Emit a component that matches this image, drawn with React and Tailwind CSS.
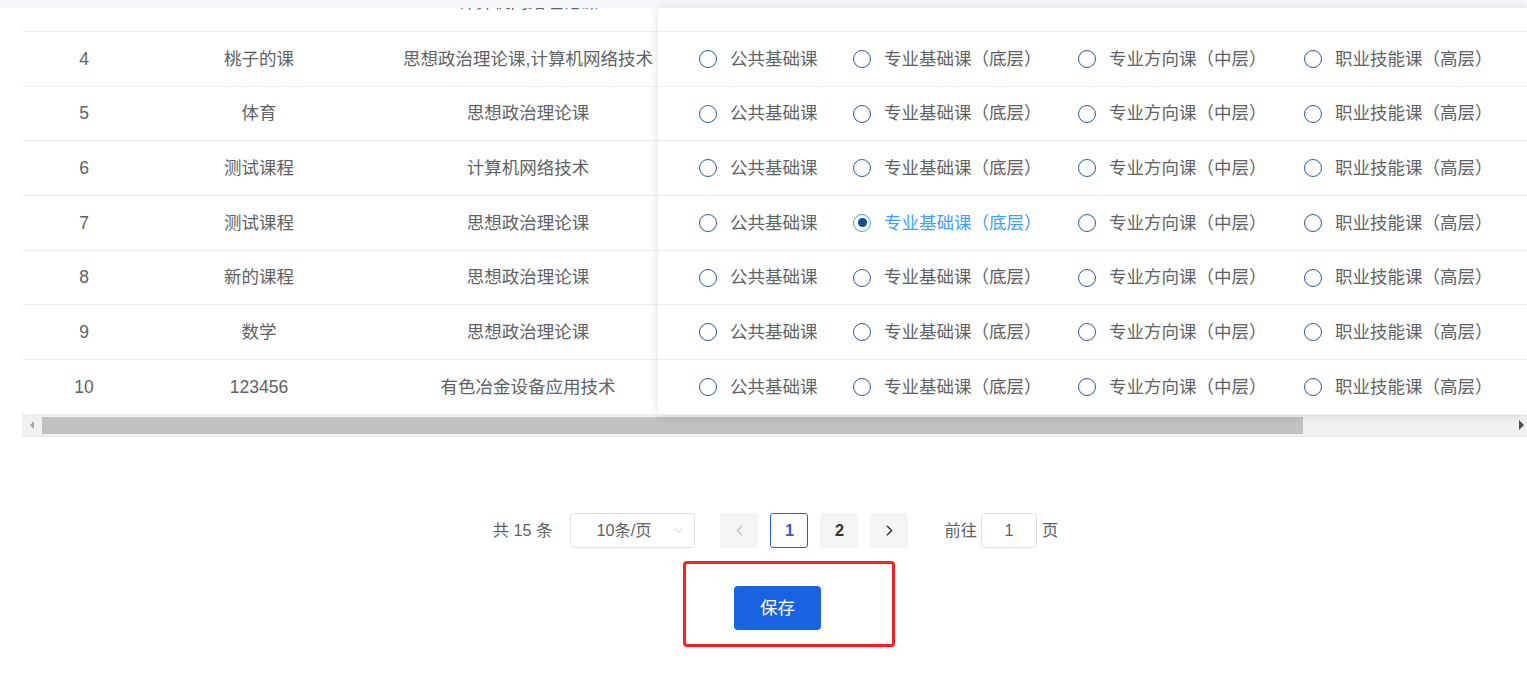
import React, { useState } from 'react';
import { ChevronDown, ChevronLeft, ChevronRight } from 'lucide-react';

const rows = [
    { no: 4, name: '桃子的课', major: '思想政治理论课,计算机网络技术', level: null },
    { no: 5, name: '体育', major: '思想政治理论课', level: null },
    { no: 6, name: '测试课程', major: '计算机网络技术', level: null },
    { no: 7, name: '测试课程', major: '思想政治理论课', level: 1 },
    { no: 8, name: '新的课程', major: '思想政治理论课', level: null },
    { no: 9, name: '数学', major: '思想政治理论课', level: null },
    { no: 10, name: '123456', major: '有色冶金设备应用技术', level: null },
];

const levels = [
    { label: '公共基础课', w: 'w-[154px]' },
    { label: '专业基础课（底层）', w: 'w-[225px]' },
    { label: '专业方向课（中层）', w: 'w-[226px]' },
    { label: '职业技能课（高层）', w: 'w-[200px]' },
];

const Radio = ({ checked, label, width, onClick }) => (
    <label onClick={onClick} className={`${width} flex items-center cursor-pointer shrink-0`}>
        {checked ? (
            <span className="w-[18px] h-[18px] rounded-full border border-[#409eff] flex items-center justify-center">
                <span className="w-[9px] h-[9px] rounded-full bg-[#0f4ba3]" />
            </span>
        ) : (
            <span className="w-[18px] h-[18px] rounded-full border-[1.6px] border-[#2659ad]" />
        )}
        <span className={`pl-[13px] whitespace-nowrap ${checked ? 'text-[#409eff]' : 'text-[#606266]'}`}>
            {label}
        </span>
    </label>
);

export default function App() {
    const [picked, setPicked] = useState(() => rows.map((r) => r.level));

    return (
        <div className="w-[1527px] h-[676px] overflow-hidden bg-white text-[#606266] text-[17.5px] font-['Liberation_Sans','Noto_Sans_CJK_SC',sans-serif]">
            <div className="h-2 bg-[#f5f7fa]" />

            <div className="pl-[22px]">
                <div className="flex">
                    <div className="w-[636px] shrink-0">
                        <div className="h-[24px] border-b border-[#ebeef5] overflow-hidden flex">
                            <div className="w-[124px]" />
                            <div className="w-[226px]" />
                            <div className="w-[286px] pl-[26px] flex justify-center">
                                <span className="-mt-[18px] leading-[24px]">计算机网络理论课</span>
                            </div>
                        </div>
                        {rows.map((r) => (
                            <div key={r.no} className="h-[54.7px] border-b border-[#ebeef5] flex items-center">
                                <div className="w-[124px] text-center">{r.no}</div>
                                <div className="w-[226px] text-center">{r.name}</div>
                                <div className="w-[286px] pl-[26px] flex justify-center whitespace-nowrap">{r.major}</div>
                            </div>
                        ))}
                    </div>

                    <div className="relative w-[869px] shrink-0 bg-white shadow-[0_0_10px_rgba(0,0,0,0.12)]">
                        <div className="h-[24px] border-b border-[#ebeef5]" />
                        {rows.map((r, i) => (
                            <div key={r.no} className="h-[54.7px] border-b border-[#ebeef5] flex items-center pl-[41px]">
                                {levels.map((lv, j) => (
                                    <Radio
                                        key={lv.label}
                                        label={lv.label}
                                        width={lv.w}
                                        checked={picked[i] === j}
                                        onClick={() =>
                                            setPicked((p) => p.map((v, k) => (k === i ? j : v)))
                                        }
                                    />
                                ))}
                            </div>
                        ))}
                    </div>
                </div>

                <div className="h-[22px] bg-[#f1f1f1] border-b border-[#e4e7ed] flex items-center">
                    <div className="w-[20px] flex justify-center">
                        <span className="w-0 h-0 border-y-[4px] border-y-transparent border-r-[4px] border-r-[#a3a3a3]" />
                    </div>
                    <div className="w-[1261px] h-[17px] bg-[#c1c1c1]" />
                    <div className="flex-1 flex justify-end pr-[3px]">
                        <span className="w-0 h-0 border-y-[5px] border-y-transparent border-l-[5px] border-l-[#505050]" />
                    </div>
                </div>

                <div className="mt-[76px] flex justify-center items-center pl-[2px] text-[16.25px]">
                    <span className="mr-[18px]">共 15 条</span>
                    <div className="w-[125px] h-[35px] border border-[#dcdfe6] rounded-[4px] flex items-center pl-[25px] pr-[8px]">
                        <span className="flex-1">10条/页</span>
                        <ChevronDown size={15} strokeWidth={1.5} className="text-[#c0c4cc]" />
                    </div>
                    <div className="ml-[25px] flex items-center gap-[12px]">
                        <button className="w-[38px] h-[35px] rounded-[3px] bg-[#f4f4f5] flex items-center justify-center">
                            <ChevronLeft size={17} strokeWidth={2} className="text-[#c0c4cc]" />
                        </button>
                        <button className="w-[38px] h-[35px] rounded-[3px] border border-[#2a5fd8] bg-white text-[#3b55d6] font-bold flex items-center justify-center">
                            1
                        </button>
                        <button className="w-[38px] h-[35px] rounded-[3px] bg-[#f4f4f5] text-[#303133] font-bold flex items-center justify-center">
                            2
                        </button>
                        <button className="w-[38px] h-[35px] rounded-[3px] bg-[#f4f4f5] flex items-center justify-center">
                            <ChevronRight size={17} strokeWidth={2} className="text-[#303133]" />
                        </button>
                    </div>
                    <span className="ml-[36px]">前往</span>
                    <div className="ml-[4px] w-[56px] h-[35px] border border-[#dcdfe6] rounded-[4px] flex items-center justify-center">
                        1
                    </div>
                    <span className="ml-[5px]">页</span>
                </div>

                <div className="mt-[13px] flex justify-center pl-[29px]">
                    <div className="w-[212px] h-[86px] border-[3px] border-[#ff1f1f] rounded-[4px] pl-[48px] pt-[22px]">
                        <button className="w-[87px] h-[44px] rounded-[4px] bg-[#1a63e0] text-white text-[17.5px]">
                            保存
                        </button>
                    </div>
                </div>
            </div>
        </div>
    );
}
